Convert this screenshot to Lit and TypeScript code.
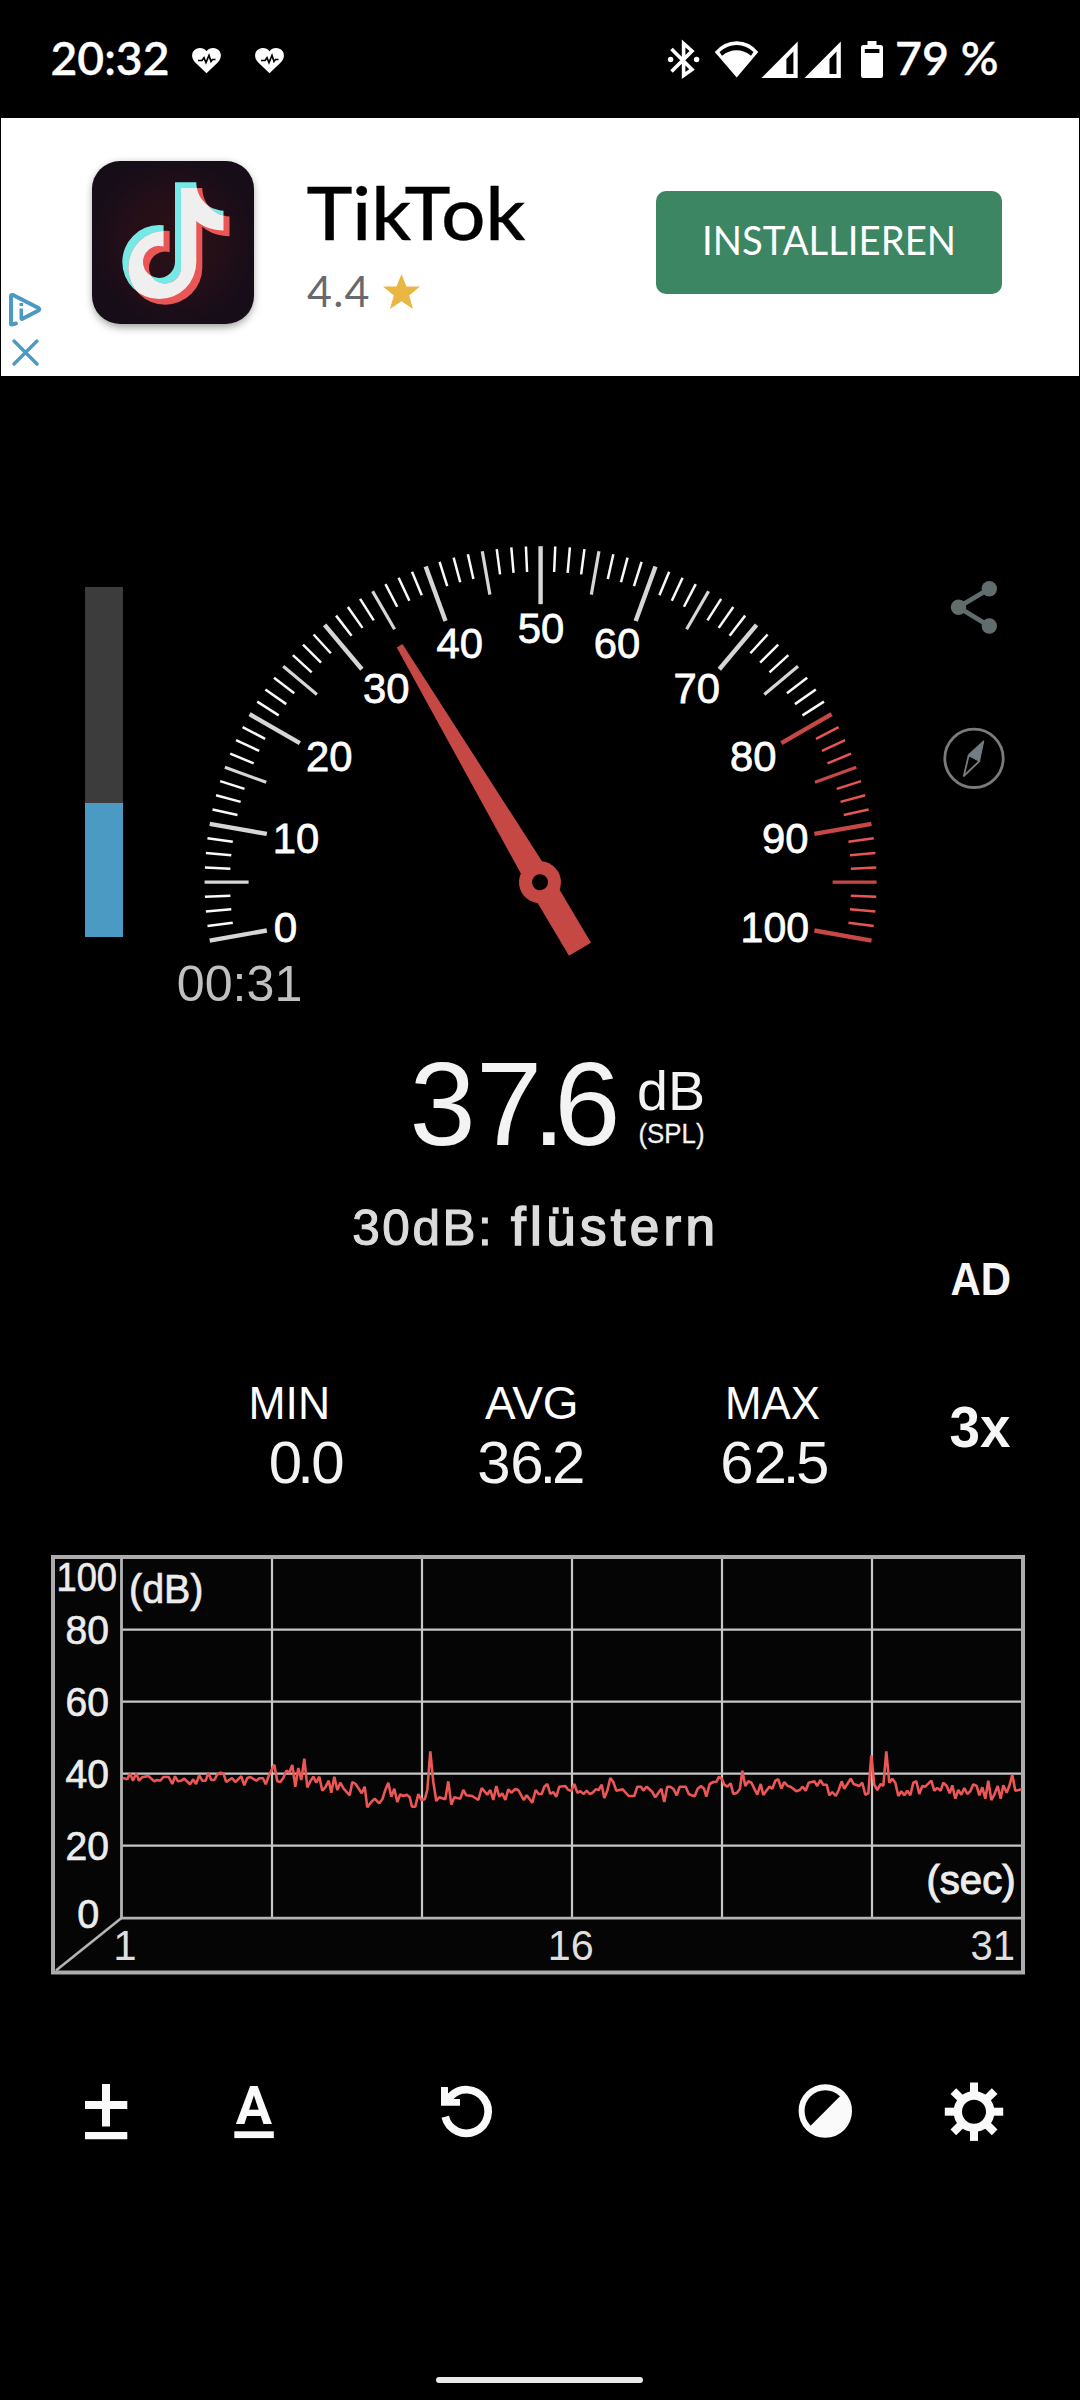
import { LitElement, html, svg, css, type TemplateResult } from "lit";
import { customElement, property } from "lit/decorators.js";

type Glyphs = TemplateResult | TemplateResult[];

/** An svg that shows the region (x, y, w, h) of the 1080x2400 canvas. */
const view = (x: number, y: number, w: number, h: number, body: unknown) => html`
  <svg class="view" width=${w} height=${h} viewBox="${x} ${y} ${w} ${h}">${body}</svg>
`;

const shared = css`
  :host {
    display: block;
    color: #fff;
    font-family: "Liberation Sans", Arial, sans-serif;
  }
  * {
    box-sizing: border-box;
  }
  .view {
    display: block;
    flex: none;
  }
  .g {
    font-family: Lato, "Open Sans", sans-serif;
  }
`;

/* ---------- status bar ---------- */

@customElement("status-bar")
class StatusBar extends LitElement {
  static styles = [
    shared,
    css`
      .bar {
        display: flex;
        justify-content: space-between;
        height: 118px;
        padding: 0 80px 0 48px;
      }
      .group {
        display: flex;
      }
      .g {
        font-size: 46px;
        font-weight: 600;
        fill: #fff;
        stroke: #fff;
        stroke-width: 0.3px;
      }
    `,
  ];

  private heart(x: number) {
    return view(
      x, 0, 63, 118,
      svg`<g transform="translate(${x + 8} 48)">
        <path fill="#fff" d="M14.5 25.2 L3 14.2 C-1.6 9.2 -.3 3 4 1 C8 -.9 12 .2 14.5 3.2 C17 .2 21 -.9 25 1 C29.300 3 30.600 9.200 26 14.200 Z"/>
        <path fill="none" stroke="#000" stroke-width="1.7" d="M6 12.500 H10 L12 9.800 L14 14.500 L17 7.500 L19 13.500 L20.500 11.500 H23.500"/>
      </g>`
    );
  }

  private signal(x: number) {
    return svg`
      <path fill="#fff" d="M${x} 78 L${x + 36.3} 41.500 V78 Z"/>
      <path fill="#000" d="M${x + 25} 59 L${x + 32} 51.500 V74 H${x + 25} Z"/>`;
  }

  render() {
    return html`
      <div class="bar">
        <div class="group">
          ${view(48, 0, 136, 118, svg`<text class="g" x="50.500" y="75.300" textLength="119" lengthAdjust="spacingAndGlyphs">20:32</text>`)}
          ${this.heart(184)} ${this.heart(247)}
        </div>
        <div class="group">
          ${view(660, 0, 50, 118, svg`
            <path fill="none" stroke="#fff" stroke-width="3.600" d="M671.500 49 L692 69.500 L683.600 75.500 V43.500 L692 51 L671.500 71.500" stroke-linejoin="miter"/>
            <circle cx="670.600" cy="59.500" r="2.700" fill="#fff"/>
            <circle cx="696.600" cy="59.500" r="2.700" fill="#fff"/>`)}
          ${view(710, 0, 50, 118, svg`
            <path fill="#fff" d="M736.700 77.500 L714.800 52 Q724 41.300 736.700 41.300 Q749.500 41.300 758.300 52 Z"/>
            <path fill="#000" d="M719.500 52 Q727.500 45 736.700 45 Q746 45 753.500 52 L751 55.800 Q744.500 50.300 736.700 50.300 Q728.500 50.300 722 55.800 Z"/>`)}
          ${view(760, 0, 90, 118, svg`${this.signal(761.4)}${this.signal(804.5)}`)}
          ${view(850, 0, 43, 118, svg`
            <path fill="#fff" d="M867.500 41 H876.500 V45 H880.500 Q883 45 883 47.500 V75.500 Q883 78 880.500 78 H863.500 Q861 78 861 75.500 V47.500 Q861 45 863.500 45 H867.500 Z"/>
            <rect x="864.800" y="49" width="14.600" height="4" fill="#000"/>`)}
          ${view(893, 0, 107, 118, svg`<text class="g" x="895" y="75.300" textLength="103.500" lengthAdjust="spacingAndGlyphs">79 %</text>`)}
        </div>
      </div>
    `;
  }
}

/* ---------- advertisement ---------- */

const NOTE =
  "M175 182.300 H196.300 C196.500 198 208 210 223.500 210.700 V230.500 C213 230.500 203.500 227 196.300 221 V262 A37 37 0 1 1 159.200 225 Q161.500 225 163.600 225.300 V246.600 A16 16 0 1 0 175 262 Z";

@customElement("ad-banner")
class AdBanner extends LitElement {
  static styles = [
    shared,
    css`
      .ad {
        display: flex;
        height: 258px;
        margin: 0 1px;
        background: #fff;
      }
      .cta {
        display: flex;
        flex: none;
        width: 346px;
        height: 103px;
        margin: 73px 0 0 96px;
        padding: 0;
        border: 0;
        border-radius: 10px;
        background: #3c8664;
      }
      .name {
        font-size: 73px;
        font-weight: 500;
        fill: #000;
        stroke: #000;
        stroke-width: 0.3px;
      }
      .rating {
        font-size: 43px;
        fill: #68696d;
      }
      .action {
        font-size: 41px;
        fill: #fff;
      }
    `,
  ];

  render() {
    return html`
      <div class="ad">
        ${view(1, 118, 79, 258, svg`
          <g fill="none" stroke="#4a9ac4" stroke-linecap="round" stroke-linejoin="round">
            <path stroke-width="4" d="M16 323.500 L11.500 324.500 Q11 324.500 11 323.500 V296 Q11 294.500 13 295 L38.500 308 Q40 309.300 38.500 310.500 L22 319"/>
            <path stroke-width="3.600" stroke-linecap="butt" d="M21.300 308.500 V319.500 M21.300 303 V306"/>
            <path stroke-width="3.400" d="M14 341 L37 364 M37 341 L14 364"/>
          </g>`)}
        ${view(80, 118, 220, 258, svg`
          <defs>
            <radialGradient id="glow"><stop offset="0" stop-color="#2b1016"/><stop offset=".6" stop-color="#240f18"/><stop offset="1" stop-color="#170d18"/></radialGradient>
            <filter id="soft" x="-20%" y="-20%" width="140%" height="140%"><feGaussianBlur stdDeviation="4"/></filter>
            <clipPath id="note"><path d=${NOTE}/></clipPath>
          </defs>
          <rect x="93" y="164" width="160" height="163" rx="28" fill="#000" opacity=".4" filter="url(#soft)"/>
          <rect x="92" y="161" width="162" height="163" rx="28" fill="url(#glow)"/>
          <path d=${NOTE} fill="#74e9e6"/>
          <path d=${NOTE} fill="#ea5656" transform="translate(6 5.700)"/>
          <g clip-path="url(#note)"><path d=${NOTE} fill="#efefef" transform="translate(6 5.700)"/></g>`)}
        ${view(300, 118, 260, 258, svg`
          <text class="g name" x="306.500" y="240" textLength="219" lengthAdjust="spacingAndGlyphs">TikTok</text>
          <text class="g rating" x="307" y="307" textLength="62.500" lengthAdjust="spacing">4.4</text>
          <path fill="#ebb744" d="M401.500 274 L406.500 286.500 H420 L409.200 295.500 L413 309 L401.500 301.300 L390 309 L393.800 295.500 L383 286.500 H396.500 Z"/>`)}
        <button class="cta">
          ${view(656, 191, 346, 103, svg`<text class="g action" x="702" y="255" textLength="254" lengthAdjust="spacingAndGlyphs">INSTALLIEREN</text>`)}
        </button>
      </div>
    `;
  }
}

/* ---------- gauge ---------- */

const LABELS: [string, number, number, number][] = [
  ["0", 285.5, 942.3, 23.5],
  ["10", 296, 852.8, 46.5],
  ["20", 329.2, 771.2, 46.5],
  ["30", 386.2, 703, 46.5],
  ["40", 459.8, 658, 46.5],
  ["50", 541, 643.3, 46.5],
  ["60", 616.9, 658, 46.5],
  ["70", 696.7, 703, 46.5],
  ["80", 753.2, 770.5, 46.5],
  ["90", 785.3, 852.8, 46.5],
  ["100", 774.8, 942.3, 68.5],
];

@customElement("sound-gauge")
class SoundGauge extends LitElement {
  @property({ type: Number }) angle = 59.3;
  @property({ type: Number }) level = 38.3;

  static styles = [
    shared,
    css`
      .meter {
        display: flex;
        height: 644px;
        padding-left: 85px;
      }
      .level {
        display: flex;
        flex-direction: column;
        justify-content: flex-end;
        flex: none;
        width: 38px;
        height: 350px;
        margin: 211px 37px 0 0;
        background: #3c3c3c;
      }
      .fill {
        background: #4a9ac4;
      }
      .num {
        font-size: 42.5px;
        fill: #fff;
        stroke: #fff;
        stroke-width: 0.8px;
        text-anchor: middle;
      }
      .clock {
        font-size: 50.5px;
        fill: #c0c0c0;
      }
    `,
  ];

  private ticks(): Glyphs {
    const cx = 540.6;
    const cy = 882.2;
    const r = 336;
    return Array.from({ length: 81 }, (_, i) => {
      const a = ((-10 + i * 2.5) * Math.PI) / 180;
      const major = i % 8 === 0;
      const mid = i % 4 === 0;
      const inner = r - (major ? 58 : mid ? 44 : 25.5);
      const red = i >= 64;
      const stroke = red ? (mid ? "#c64845" : "#e95552") : mid ? "#d6d6d6" : "#fafafa";
      return svg`<line
        x1=${cx - r * Math.cos(a)} y1=${cy - r * Math.sin(a)}
        x2=${cx - inner * Math.cos(a)} y2=${cy - inner * Math.sin(a)}
        stroke=${stroke} stroke-width=${major ? 4.4 : mid ? 3.2 : 2.5}/>`;
    });
  }

  render() {
    return html`
      <div class="meter">
        <div class="level"><div class="fill" style="height:${this.level}%"></div></div>
        ${view(160, 376, 740, 644, svg`
          ${this.ticks()}
          ${LABELS.map(([t, x, y, w]) => svg`<text class="num" x=${x} y=${y} textLength=${w} lengthAdjust="spacingAndGlyphs">${t}</text>`)}
          <g transform="translate(540 882.200) rotate(${this.angle})" fill="#c54845">
            <path d="M-275 -3.300 L0 -13 H78 V12.600 H0 L-275 3.300 Z"/>
            <circle r="21"/>
            <circle r="8" fill="#000"/>
          </g>
          <text class="clock" x="176.800" y="1000.500" textLength="125.500" lengthAdjust="spacingAndGlyphs">00:31</text>`)}
        ${view(900, 376, 180, 644, svg`
          <g fill="#616d6c">
            <path fill="none" stroke="#616d6c" stroke-width="4.800" d="M989.300 588.800 L958.300 607.300 L989.300 626"/>
            <circle cx="989.300" cy="588.800" r="7.700"/>
            <circle cx="958.500" cy="607.300" r="7.700"/>
            <circle cx="989.300" cy="626" r="7.700"/>
          </g>
          <g fill="none" stroke="#797b7d" stroke-linejoin="round">
            <circle cx="974" cy="758.300" r="29.200" stroke-width="2.800"/>
            <path stroke-width="1.800" d="M963.800 776 L968.700 755.300 L979.500 761 Z"/>
            <path stroke-width="1.200" fill="#6f7d84" d="M983.700 741 L968.900 754.500 L979.700 760 Z"/>
          </g>`)}
      </div>
    `;
  }
}

/* ---------- numeric readouts ---------- */

@customElement("sound-readout")
class SoundReadout extends LitElement {
  static styles = [
    shared,
    css`
      .wrap {
        display: flex;
        height: 535px;
        padding-left: 230px;
      }
      .main {
        display: flex;
        flex-direction: column;
      }
      .stats {
        display: flex;
      }
      .value {
        font-size: 119px;
        fill: #f3f3f3;
      }
      .unit {
        font-size: 55px;
        fill: #f3f3f3;
      }
      .spl {
        font-size: 27px;
        fill: #f3f3f3;
        stroke: #f3f3f3;
        stroke-width: 0.3px;
      }
      .hint {
        fill: #dcdcdc;
        stroke: #dcdcdc;
      }
      .hint-db {
        font-size: 49.5px;
        stroke-width: 1.1px;
      }
      .hint-word {
        font-size: 53px;
        stroke-width: 1.7px;
      }
      .cap {
        font-size: 45.5px;
        fill: #fff;
      }
      .num {
        font-size: 60px;
        fill: #f3f3f3;
      }
      .side {
        font-weight: 700;
        fill: #f6f6f6;
      }
      .ad {
        font-size: 45.5px;
      }
      .speed {
        font-size: 57px;
      }
    `,
  ];

  render() {
    return html`
      <div class="wrap">
        <div class="main">
          ${view(230, 1020, 670, 150, svg`
            <text class="value" x="409.500 476 532.300 554.300" y="1145">37.6</text>
            <text class="unit" x="637" y="1110" textLength="68" lengthAdjust="spacingAndGlyphs">dB</text>
            <text class="spl" x="638.500" y="1143" textLength="66" lengthAdjust="spacingAndGlyphs">(SPL)</text>`)}
          ${view(230, 1170, 670, 200, svg`
            <text class="hint hint-db" x="352.300" y="1245.300" textLength="139.500" lengthAdjust="spacing">30dB:</text>
            <text class="hint hint-word" x="511" y="1245.300" textLength="204" lengthAdjust="spacing">flüstern</text>`)}
          <div class="stats">
            ${view(230, 1370, 200, 185, svg`
              <text class="cap" x="248.500" y="1419" textLength="81.500" lengthAdjust="spacingAndGlyphs">MIN</text>
              <text class="num" x="268.700 297.300 311.300" y="1482.500">0.0</text>`)}
            ${view(430, 1370, 240, 185, svg`
              <text class="cap" x="485" y="1419" textLength="93.500" lengthAdjust="spacingAndGlyphs">AVG</text>
              <text class="num" x="477.300 510.300 539.500 552" y="1482.500">36.2</text>`)}
            ${view(670, 1370, 230, 185, svg`
              <text class="cap" x="725" y="1419" textLength="95" lengthAdjust="spacingAndGlyphs">MAX</text>
              <text class="num" x="720.300 753.500 782.800 796" y="1482.500">62.5</text>`)}
          </div>
        </div>
        ${view(900, 1020, 180, 535, svg`
          <text class="side ad" x="950.500" y="1295" textLength="60.500" lengthAdjust="spacingAndGlyphs">AD</text>
          <text class="side speed" x="949.500" y="1446.500" textLength="61" lengthAdjust="spacingAndGlyphs">3x</text>`)}
      </div>
    `;
  }
}

/* ---------- history chart ---------- */

/** Samples in thirds of a pixel, each run with its own horizontal start. */
const RUNS: [number, string][] = [
  [40, "249,714 262,718 270,700 279,722 289,700 297,722 306,712 325,708 343,724 352,720 361,722 370,711 386,711 397,732 405,709 414,724 424,722 433,716 450,733 460,718 468,732 478,706 487,722 497,722 505,698 514,720 523,720 532,703 541,698 550,700 559,726 576,714 586,726 604,709 613,736 622,714 631,711 649,722 658,715 669,715 677,733 686,708 703,674 712,724 721,726 730,714 739,692 748,698 757,675 766,740 775,684 784,720 793,656 802,742 811,724 820,710 829,728 838,710 847,752 856,742 866,722 874,758 883,710 892,750 901,728 911,746 929,766 937,726 947,732 965,760 974,740"],
  [360, "22,802 32,788 44,776 58,790 67,778 76,750 85,728 94,770 103,746 112,786 121,763 130,768 140,764 149,772 156,800 166,800 175,762 184,780 194,778 202,750 211,634 220,726 229,783 238,772 256,778 265,724 274,794 283,772 301,776 310,750 319,766 337,768 355,780 365,744 382,764 391,750 400,780 409,738 418,770 427,760 436,780 445,748 454,758 466,747 475,750 491,780 500,766 517,788 527,750 536,762 545,762 553,740 562,732 571,762 580,756 589,770 598,740 616,738 625,750 634,752 643,732 652,758 661,754 671,762 680,752 689,762 698,758 707,748 716,750 725,734 733,774 742,752 751,714 760,726 769,752 788,748 806,768 823,768 832,740 843,740 850,752 860,740 877,756 886,772 904,746 913,786 922,740 931,740 941,748 950,766 959,740 977,740 986,762"],
  [690, "3,765 14,769 23,746 33,738 42,746 49,770 59,732 70,726 79,726 87,710 96,718 103,734 112,740 122,730 130,762 141,758 150,746 157,692 166,738 175,724 184,728 202,764 212,732 220,765 238,740 247,746 256,722 265,718 274,746 283,726 293,738 302,740 319,754 329,750 338,740 347,752 356,728 373,724 382,738 391,720 400,734 410,734 418,766 427,756 437,768 446,750 455,724 463,746 482,716 491,732 508,738 517,728 526,764 535,760 544,646 553,734 562,750 572,732 580,738 589,634 598,728 607,716 616,728 625,768 634,754 643,766 652,752 661,766 670,728 679,724 688,762 697,738 706,740 724,722 733,752 742,744 752,752 760,728 770,738 779,760 787,736 796,776 805,750 814,764 823,744 832,762 841,754 850,733 860,738 868,766 877,742 886,776 895,722 904,780 913,764 923,738 932,776 940,736 950,758 958,738 967,704 976,752 986,750 995,748"],
];

const TRACE = RUNS.flatMap(([x0, run]) =>
  run.split(" ").map((pair) => {
    const [x, y] = pair.split(",").map(Number);
    return `${(x0 + x / 3).toFixed(1)},${(1540 + y / 3).toFixed(1)}`;
  })
).join(" ");

@customElement("history-chart")
class HistoryChart extends LitElement {
  static styles = [
    shared,
    css`
      .chart {
        display: flex;
        justify-content: center;
        padding-right: 4px;
      }
      .y {
        font-size: 40.5px;
        fill: #ececec;
        stroke: #ececec;
        stroke-width: 0.7px;
        text-anchor: end;
      }
      .name {
        font-size: 40px;
        fill: #ececec;
        stroke: #ececec;
        stroke-width: 0.7px;
      }
      .sec {
        stroke-width: 1.1px;
      }
      .x {
        font-size: 42px;
        fill: #dedede;
      }
    `,
  ];

  render() {
    const rows: [string, number, number, number][] = [
      ["100", 117, 1591.4, 60.5],
      ["80", 109, 1644.4, 43.5],
      ["60", 109, 1716.2, 43.5],
      ["40", 109, 1788.2, 43.5],
      ["20", 109, 1860.2, 43.5],
      ["0", 99.3, 1928, 22],
    ];
    return html`
      <div class="chart">
        ${view(51, 1555, 974, 421, svg`
          <rect x="53" y="1557" width="970" height="415.500" fill="#050505" stroke="#adabad" stroke-width="4"/>
          <g stroke="#c6c6c6" stroke-width="2.200">
            ${[1629.6, 1701.6, 1773.6, 1845.6].map((y) => svg`<line x1="122" x2="1021" y1=${y} y2=${y}/>`)}
            ${[272, 422, 572, 722, 872].map((x) => svg`<line x1=${x} x2=${x} y1="1559" y2="1917"/>`)}
          </g>
          <g stroke="#b4b4b4" stroke-width="2.800">
            <line x1="121.500" x2="121.500" y1="1558" y2="1919"/>
            <line x1="120" x2="1021" y1="1918.200" y2="1918.200"/>
            <line x1="121.500" x2="56" y1="1918" y2="1970.500" stroke-width="2.600"/>
          </g>
          <polyline points=${TRACE} fill="none" stroke="#ec5654" stroke-width="2.600" stroke-linejoin="bevel"/>
          ${rows.map(([t, x, y, w]) => svg`<text class="y" x=${x} y=${y} textLength=${w} lengthAdjust="spacingAndGlyphs">${t}</text>`)}
          <text class="name" x="129" y="1603" textLength="74.500" lengthAdjust="spacingAndGlyphs">(dB)</text>
          <text class="name sec" x="926.500" y="1894.300" textLength="89" lengthAdjust="spacingAndGlyphs">(sec)</text>
          <text class="x" x="113.200" y="1959.500">1</text>
          <text class="x" x="547.800" y="1959.500" textLength="46" lengthAdjust="spacingAndGlyphs">16</text>
          <text class="x" x="970.500" y="1959.500" textLength="44.500" lengthAdjust="spacingAndGlyphs">31</text>`)}
      </div>
    `;
  }
}

/* ---------- toolbar ---------- */

@customElement("tool-bar")
class ToolBar extends LitElement {
  static styles = [
    shared,
    css`
      .tools {
        display: flex;
        justify-content: space-between;
        height: 140px;
        padding: 0 66px;
      }
      .group {
        display: flex;
      }
      .letter {
        font: 700 54px Roboto, sans-serif;
        fill: #fafafa;
        text-anchor: middle;
      }
    `,
  ];

  render() {
    return html`
      <div class="tools">
        <div class="group">
          ${view(66, 2040, 80, 140, svg`
            <path fill="#fafafa" d="M102 2084 H110 V2101 H127.300 V2109 H110 V2126.500 H102 V2109 H85 V2101 H102 Z M85 2132 H127.300 V2139.300 H85 Z"/>`)}
          ${view(146, 2040, 254, 140, svg`
            <text class="letter" x="254" y="2124.300">A</text>
            <rect x="234.300" y="2131.300" width="39.500" height="6.800" fill="#fafafa"/>`)}
          ${view(400, 2040, 140, 140, svg`
            <path fill="none" stroke="#fafafa" stroke-width="7.700" d="M445.200 2116.800 A21.800 21.800 0 1 0 450.500 2096.500"/>
            <path fill="#fafafa" d="M441 2087 H448 V2093 L453.500 2099 H460 V2105.700 H441 Z"/>`)}
        </div>
        <div class="group">
          ${view(780, 2040, 160, 140, svg`
            <circle cx="825.300" cy="2111" r="23.700" fill="none" stroke="#fafafa" stroke-width="6"/>
            <path fill="#fafafa" d="M842 2094.300 A23.620 23.620 0 0 1 808.600 2127.700 Z"/>`)}
          ${view(940, 2040, 74, 140, svg`
            <g transform="translate(974 2111.700)">
              <circle r="16.200" fill="none" stroke="#fafafa" stroke-width="8.400"/>
              ${Array.from({ length: 8 }, (_, i) => svg`<rect x="-4" y="-29.200" width="8" height="12" fill="#fafafa" transform="rotate(${i * 45})"/>`)}
            </g>`)}
        </div>
      </div>
    `;
  }
}

@customElement("app-root")
class AppRoot extends LitElement {
  static styles = [
    shared,
    css`
      .screen {
        display: flex;
        flex-direction: column;
        width: 1080px;
        height: 2400px;
        overflow: hidden;
        background: #000;
      }
      .tools {
        margin-top: 64px;
      }
      .home {
        align-self: center;
        width: 207px;
        height: 6px;
        margin: auto 1px 17px 0;
        border-radius: 3px;
        background: #eaeaea;
      }
    `,
  ];

  render() {
    return html`
      <div class="screen">
        <status-bar></status-bar>
        <ad-banner></ad-banner>
        <sound-gauge></sound-gauge>
        <sound-readout></sound-readout>
        <history-chart></history-chart>
        <tool-bar class="tools"></tool-bar>
        <div class="home"></div>
      </div>
    `;
  }
}
